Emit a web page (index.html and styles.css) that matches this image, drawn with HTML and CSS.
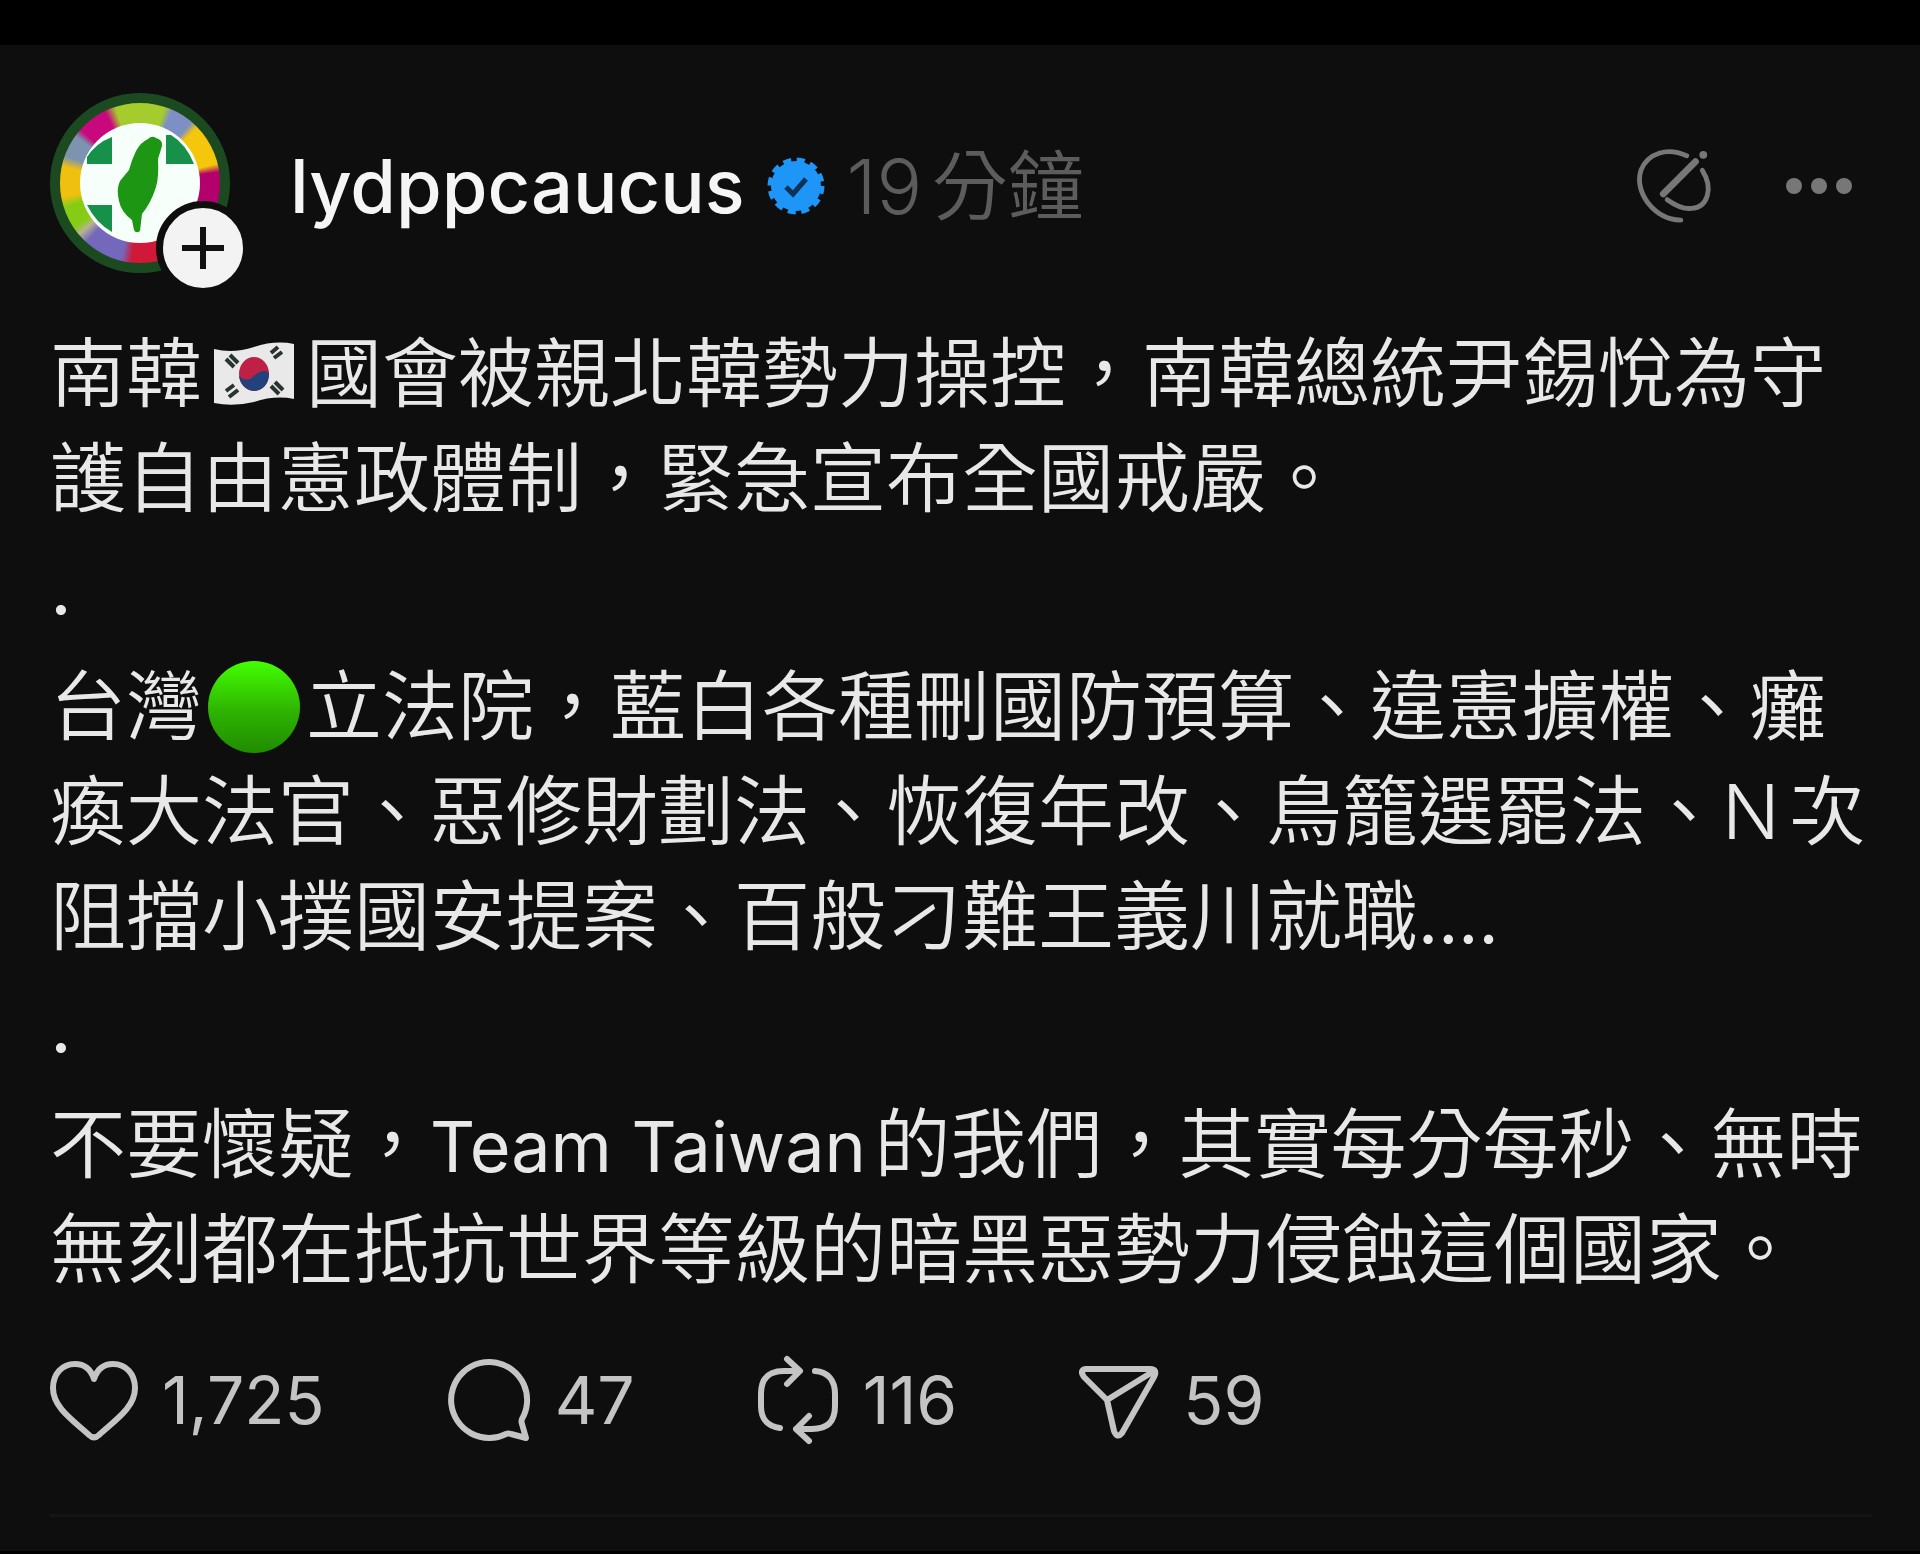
FILE: index.html
```html
<!DOCTYPE html>
<html lang="zh-Hant">
<head>
  <meta charset="utf-8">
  <meta name="viewport" content="width=device-width, initial-scale=1">
  <title>lydppcaucus</title>
  <link rel="stylesheet" href="styles.css">
</head>
<body>
  <article class="post">
    <header class="post-header">
      <div class="avatar">
        <svg class="avatar-logo" viewBox="0 0 180 180" aria-hidden="true">
          <circle cx="90" cy="90" r="60" fill="#f6fffa"/>
          <path d="M37 71V64Q46 50 62 44V71ZM116 42H121Q136 51 144 71H116ZM37 112H62V139Q46 130 37 112Z" fill="#17914a"/>
          <path d="M98 46Q102 42 106 45Q113 47 112 53L108 66Q109 84 106 94Q101 110 92 121L90 138Q86 141 84 137L82 127Q71 119 69 108Q66 96 70 88L79 77Q82 66 86 58Q91 49 98 46Z" fill="#1d9713"/>
        </svg>
        <button class="follow" type="button" aria-label="追蹤">
          <svg viewBox="0 0 42 42"><path d="M21 0V42M0 21H42" stroke="#111" stroke-width="6"/></svg>
        </button>
      </div>

      <a class="user" href="#">lydppcaucus</a>
      <svg class="verified" viewBox="0 0 58 58" aria-hidden="true">
        <circle cx="29" cy="29" r="25" fill="#1d96f8"/>
        <circle cx="29" cy="29" r="26" fill="none" stroke="#1d96f8" stroke-width="5" stroke-dasharray="8 5.61"/>
        <path d="M19 30L26 37L39 22" fill="none" stroke="#0b3257" stroke-width="5"/>
      </svg>
      <time class="time">19分鐘</time>

      <div class="tools">
        <button type="button" aria-label="AI">
          <svg class="icon-ai" viewBox="0 0 80 80">
            <path d="M52 9C32 0 12 6 5 24C-2 46 18 74 46 75"/>
            <path d="M68 24C80 43 73 62 57 63C47 64 39 59 32 54"/>
            <path d="M61 15L28 48" stroke-width="7"/>
            <circle cx="69" cy="8" r="4" fill="currentColor" stroke="none"/>
          </svg>
        </button>
        <button type="button" aria-label="更多">
          <svg class="icon-more" viewBox="0 0 66 16">
            <circle cx="8" cy="8" r="8"/><circle cx="33" cy="8" r="8"/><circle cx="58" cy="8" r="8"/>
          </svg>
        </button>
      </div>
    </header>

    <div class="post-text">
      <p>南韓<svg class="emoji" viewBox="0 0 102 94" role="img" aria-label="南韓國旗">
        <path d="M11 22Q30 27 51 20Q72 13 91 17V72Q72 68 51 75Q30 80 11 76Z" fill="#e9e9e9"/>
        <path d="M23 32L31 40M27 28L35 36M68 26L75 20M71 31L79 25M68 59L76 67M72 55L80 63M23 64L31 58M26 70L35 63" stroke="#29332f" stroke-width="4"/>
        <ellipse cx="51" cy="47" rx="15" ry="17" fill="#be2145"/>
        <path d="M36 49Q44 56 51 49Q60 41 66 46Q66 62 51 64Q38 62 36 49Z" fill="#21427a"/>
      </svg>國會被親北韓勢力操控，南韓總統尹錫悅為守護自由憲政體制，緊急宣布全國戒嚴。</p>
      <p class="dot">.</p>
      <p>台灣<svg class="emoji" viewBox="0 0 102 94" role="img" aria-label="綠色圓形">
        <defs>
          <linearGradient id="green" x1="0" y1="0" x2="0" y2="1">
            <stop offset="0" stop-color="#43ff00"/>
            <stop offset=".55" stop-color="#2eb300"/>
            <stop offset="1" stop-color="#208c00"/>
          </linearGradient>
        </defs>
        <circle cx="51" cy="47" r="46" fill="url(#green)"/>
      </svg>立法院，藍白各種刪國防預算、違憲擴權、癱瘓大法官、惡修財劃法、恢復年改、鳥籠選罷法、N次阻擋小撲國安提案、百般刁難王義川就職<span class="latin ellipsis">....</span></p>
      <p class="dot">.</p>
      <p>不要懷疑，<span class="latin">Team Taiwan</span>的我們，其實每分每秒、無時無刻都在抵抗世界等級的暗黑惡勢力侵蝕這個國家。</p>
    </div>

    <footer class="actions">
      <button type="button" aria-label="讚">
        <svg viewBox="0 0 88 84">
          <path d="M44 21C40 9 33 6 25 6C12 6 3 16 3 30C3 50 24 63 39 77Q44 82 49 77C64 63 85 50 85 30C85 16 76 6 63 6C55 6 48 9 44 21Z"/>
        </svg>
        <span>1,725</span>
      </button>
      <button type="button" aria-label="回覆">
        <svg viewBox="0 0 84 84">
          <path d="M75 61A38 38 0 1 0 59 76Q61 75 64 76L79 80L75 66Q74 63 75 61Z"/>
        </svg>
        <span>47</span>
      </button>
      <button type="button" aria-label="轉發">
        <svg viewBox="0 0 82 84">
          <path d="M23 70C10 68 4 61 4 48V36C4 20 12 13 27 13H42M30 1L43 13L30 26M58 13C71 14 78 22 78 36V48C78 64 70 71 55 71H39M52 58L39 71L52 83"/>
        </svg>
        <span>116</span>
      </button>
      <button type="button" aria-label="分享">
        <svg viewBox="0 0 80 84">
          <path d="M7 11H71Q79 11 75 19L43 75Q38 81 35 73L28 42L5 19Q0 12 7 11ZM28 42L75 13"/>
        </svg>
        <span>59</span>
      </button>
    </footer>
  </article>
</body>
</html>
```
FILE: styles.css
```css
* {
  box-sizing: border-box;
}

body {
  margin: 0;
  padding: 45px 0 3px;
  background-color: #000;
  color: #e8e8e8;
  font-family: Inter, "Noto Sans CJK TC", sans-serif;
  font-size: 76px;
  font-weight: 350;
}

button {
  display: flex;
  align-items: center;
  border: 0;
  padding: 0;
  background: none;
  color: inherit;
  font: inherit;
  cursor: pointer;
}

svg {
  overflow: visible;
}

.post {
  padding: 48px 48px 34px 50px;
  background-color: #0e0e0e;
}

/* header */
.post-header {
  display: flex;
  align-items: center;
  height: 186px;
  line-height: 90px;
}

.avatar {
  position: relative;
  align-self: flex-start;
  width: 180px;
  height: 180px;
  margin-right: 60px;
  border: 10px solid #1c4a20;
  border-radius: 50%;
  background: conic-gradient(#a5cc2c 0deg 18deg, #7d8fc4 24deg 40deg, #f4c60c 46deg 76deg, #b4006c 82deg 105deg, #7c6cc0 120deg 155deg, #d01838 165deg 186deg, #7468bc 194deg 222deg, #b8b490 230deg, #86cc14 236deg 252deg, #f0c010 260deg 282deg, #7c94b0 290deg 306deg, #c8087c 312deg 334deg, #a5cc2c 342deg);
}

.avatar-logo {
  position: absolute;
  top: -10px;
  left: -10px;
  width: 180px;
  height: 180px;
}

.follow {
  position: absolute;
  right: -30px;
  bottom: -32px;
  justify-content: center;
  width: 94px;
  height: 94px;
  border: 7px solid #0e0e0e;
  border-radius: 50%;
  background-color: #f3f3f3;
}
.follow svg {
  width: 42px;
  height: 42px;
}

.user {
  color: #f5f5f5;
  font-size: 74px;
  font-weight: 500;
  text-decoration: none;
}

.verified {
  width: 58px;
  height: 58px;
  margin: 0 22px;
}

.time {
  color: #5c5c5c;
  text-autospace: normal;
}

.tools {
  display: flex;
  align-items: center;
  gap: 72px;
  margin-left: auto;
  padding-right: 20px;
  color: #777;
}
.icon-ai {
  width: 78px;
  height: 78px;
  fill: none;
  stroke: currentColor;
  stroke-width: 5;
  stroke-linecap: round;
}
.icon-more {
  width: 66px;
  height: 16px;
  fill: currentColor;
}

/* text */
.post-text {
  padding-top: 42px;
  line-height: 105px;
  text-autospace: normal;
}
.post-text p {
  margin: 0;
}
.post-text .dot {
  padding: 4px 0 14px;
  font-weight: 400;
}
.latin {
  font-size: 70px;
  font-weight: 400;
  line-height: 1;
}
.ellipsis {
  text-autospace: no-autospace;
}

.emoji {
  width: 104px;
  height: 94px;
  vertical-align: -20px;
}

/* like, reply, repost, share */
.actions {
  display: flex;
  align-items: center;
  gap: 122px;
  height: 215px;
  padding-bottom: 16px;
  border-bottom: 3px solid #151515;
  color: #c4c4c4;
  font-size: 66px;
  font-weight: 400;
}
.actions button {
  gap: 24px;
}
.actions svg {
  height: 84px;
  fill: none;
  stroke: currentColor;
  stroke-width: 6;
  stroke-linecap: round;
  stroke-linejoin: round;
}
```
